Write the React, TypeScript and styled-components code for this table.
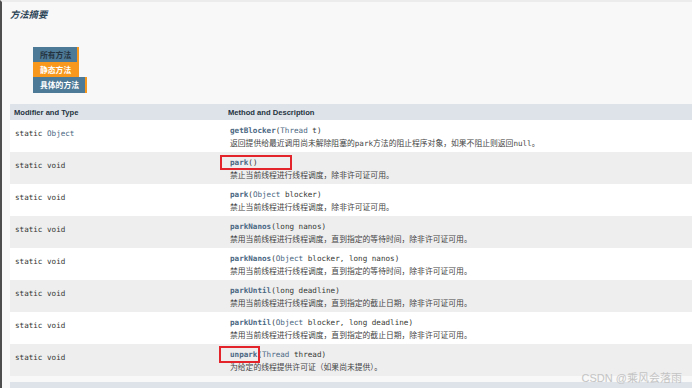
import React from "react";
import styled, { createGlobalStyle } from "styled-components";

const GlobalStyle = createGlobalStyle`
  html, body {
    margin: 0;
    padding: 0;
    background: #f8f8f8;
  }
`;

const Page = styled.div`
  position: relative;
  height: 388px;
  overflow: hidden;
  box-sizing: border-box;
  border-left: 2px solid #4e4e4e;
  border-top: 2px solid #ececec;
  padding: 6px 0 0 8px;
  background: #f8f8f8;
`;

const Title = styled.h3`
  margin: 0;
  font-family: "Noto Sans CJK SC", sans-serif;
  font-size: 9.3px;
  line-height: 12px;
  font-style: italic;
  font-weight: 700;
  color: #2c4557;
`;

const TabList = styled.div`
  display: flex;
  flex-direction: column;
  align-items: flex-start;
  margin: 27px 0 0 23px;
`;

const Tab = styled.div`
  display: flex;
  height: 15px;
  &:last-child {
    height: 16px;
  }
`;

const TabLabel = styled.span<{ $kind: "plain" | "active" | "other" }>`
  padding: 0 6px 0 7px;
  font-family: "Noto Sans CJK SC", sans-serif;
  font-size: 7.8px;
  font-weight: 700;
  line-height: 15px;
  background: ${(p) => (p.$kind === "active" ? "#f8981d" : "#4d7a97")};
  color: ${(p) => (p.$kind === "plain" ? "#253441" : "#ffffff")};
`;

const TabEnd = styled.span`
  width: 2px;
  background: #f8981d;
`;

const Summary = styled.table`
  margin-top: 11px;
  width: 700px;
  border-collapse: collapse;
  border-spacing: 0;
`;

const HeadCell = styled.th<{ $first?: boolean }>`
  width: ${(p) => (p.$first ? "214px" : "auto")};
  height: 16px;
  padding: 0 4px;
  box-sizing: border-box;
  text-align: left;
  background: #dee3e9;
  font-family: "Liberation Sans", Arial, sans-serif;
  font-size: 7.6px;
  font-weight: 700;
  color: #253441;
`;

const Row = styled.tr<{ $alt: boolean }>`
  height: 32px;
  background: ${(p) => (p.$alt ? "#eeeeef" : "#ffffff")};
`;

const TypeCell = styled.td`
  width: 214px;
  box-sizing: border-box;
  padding: 5px 4px 0 5px;
  vertical-align: top;
  line-height: 12px;
`;

const MethodCell = styled.td`
  padding: 5px 4px 0 6px;
  vertical-align: top;
  line-height: 12px;
`;

const Code = styled.span`
  font-family: "DejaVu Sans Mono", monospace;
  font-size: 7.6px;
  color: #353833;
`;

const TypeLink = styled.span`
  color: #4a6782;
`;

const Signature = styled.div`
  font-family: "DejaVu Sans Mono", monospace;
  font-size: 7.6px;
  color: #353833;
  white-space: nowrap;
`;

const NameWrap = styled.span`
  position: relative;
`;

const MethodName = styled.span`
  font-weight: 700;
  color: #4a6782;
`;

const Marker = styled.span`
  position: absolute;
  box-sizing: border-box;
  border: 2px solid #e3242b;
`;

const Desc = styled.div`
  font-family: "Noto Sans CJK SC", sans-serif;
  font-size: 7.8px;
  color: #444444;
  white-space: nowrap;

  & ${Code} {
    color: #444444;
  }
`;

const NextHeader = styled.div`
  margin-top: 6px;
  height: 16px;
  background: #dee3e9;
`;

const Watermark = styled.div`
  position: absolute;
  right: 10px;
  bottom: 3px;
  font-family: "Liberation Sans", "Noto Sans CJK SC", sans-serif;
  font-size: 11px;
  color: #c4c4c4;
`;

interface Param {
  type?: string;
  link?: boolean;
  name: string;
}

interface MethodRow {
  modifier: string;
  returnType: string;
  returnLink?: boolean;
  name: string;
  params: Param[];
  desc: React.ReactNode;
  mark?: { left: number; top: number; width: number; height: number };
}

const waitDesc = "禁用当前线程进行线程调度，直到指定的等待时间，除非许可证可用。";
const deadlineDesc = "禁用当前线程进行线程调度，直到指定的截止日期，除非许可证可用。";
const parkDesc = "禁止当前线程进行线程调度，除非许可证可用。";

const rows: MethodRow[] = [
  {
    modifier: "static",
    returnType: "Object",
    returnLink: true,
    name: "getBlocker",
    params: [{ type: "Thread", link: true, name: "t" }],
    desc: (
      <>
        返回提供给最近调用尚未解除阻塞的<Code>park</Code>方法的阻止程序对象，如果不阻止则返回<Code>null</Code>。
      </>
    ),
  },
  {
    modifier: "static",
    returnType: "void",
    name: "park",
    params: [],
    desc: parkDesc,
    mark: { left: -10, top: -3, width: 72, height: 15 },
  },
  {
    modifier: "static",
    returnType: "void",
    name: "park",
    params: [{ type: "Object", link: true, name: "blocker" }],
    desc: parkDesc,
  },
  {
    modifier: "static",
    returnType: "void",
    name: "parkNanos",
    params: [{ type: "long", name: "nanos" }],
    desc: waitDesc,
  },
  {
    modifier: "static",
    returnType: "void",
    name: "parkNanos",
    params: [
      { type: "Object", link: true, name: "blocker" },
      { type: "long", name: "nanos" },
    ],
    desc: waitDesc,
  },
  {
    modifier: "static",
    returnType: "void",
    name: "parkUntil",
    params: [{ type: "long", name: "deadline" }],
    desc: deadlineDesc,
  },
  {
    modifier: "static",
    returnType: "void",
    name: "parkUntil",
    params: [
      { type: "Object", link: true, name: "blocker" },
      { type: "long", name: "deadline" },
    ],
    desc: deadlineDesc,
  },
  {
    modifier: "static",
    returnType: "void",
    name: "unpark",
    params: [{ type: "Thread", link: true, name: "thread" }],
    desc: "为给定的线程提供许可证（如果尚未提供）。",
    mark: { left: -11, top: -4, width: 41, height: 17 },
  },
];

const tabs = [
  { label: "所有方法", kind: "plain" as const },
  { label: "静态方法", kind: "active" as const },
  { label: "具体的方法", kind: "other" as const },
];

export default function App() {
  return (
    <Page>
      <GlobalStyle />
      <Title>方法摘要</Title>
      <TabList>
        {tabs.map((t) => (
          <Tab key={t.label}>
            <TabLabel $kind={t.kind}>{t.label}</TabLabel>
            <TabEnd />
          </Tab>
        ))}
      </TabList>
      <Summary>
        <thead>
          <tr>
            <HeadCell $first>Modifier and Type</HeadCell>
            <HeadCell>Method and Description</HeadCell>
          </tr>
        </thead>
        <tbody>
          {rows.map((r, i) => (
            <Row key={i} $alt={i % 2 === 1}>
              <TypeCell>
                <Code>
                  {r.modifier} {r.returnLink ? <TypeLink>{r.returnType}</TypeLink> : r.returnType}
                </Code>
              </TypeCell>
              <MethodCell>
                <Signature>
                  <NameWrap>
                    <MethodName>{r.name}</MethodName>
                    {r.mark && (
                      <Marker
                        style={{
                          left: r.mark.left,
                          top: r.mark.top,
                          width: r.mark.width,
                          height: r.mark.height,
                        }}
                      />
                    )}
                  </NameWrap>
                  (
                  {r.params.map((p, j) => (
                    <React.Fragment key={j}>
                      {j > 0 && ", "}
                      {p.link ? <TypeLink>{p.type}</TypeLink> : p.type} {p.name}
                    </React.Fragment>
                  ))}
                  )
                </Signature>
                <Desc>{r.desc}</Desc>
              </MethodCell>
            </Row>
          ))}
        </tbody>
      </Summary>
      <NextHeader />
      <Watermark>CSDN @乘风会落雨</Watermark>
    </Page>
  );
}
